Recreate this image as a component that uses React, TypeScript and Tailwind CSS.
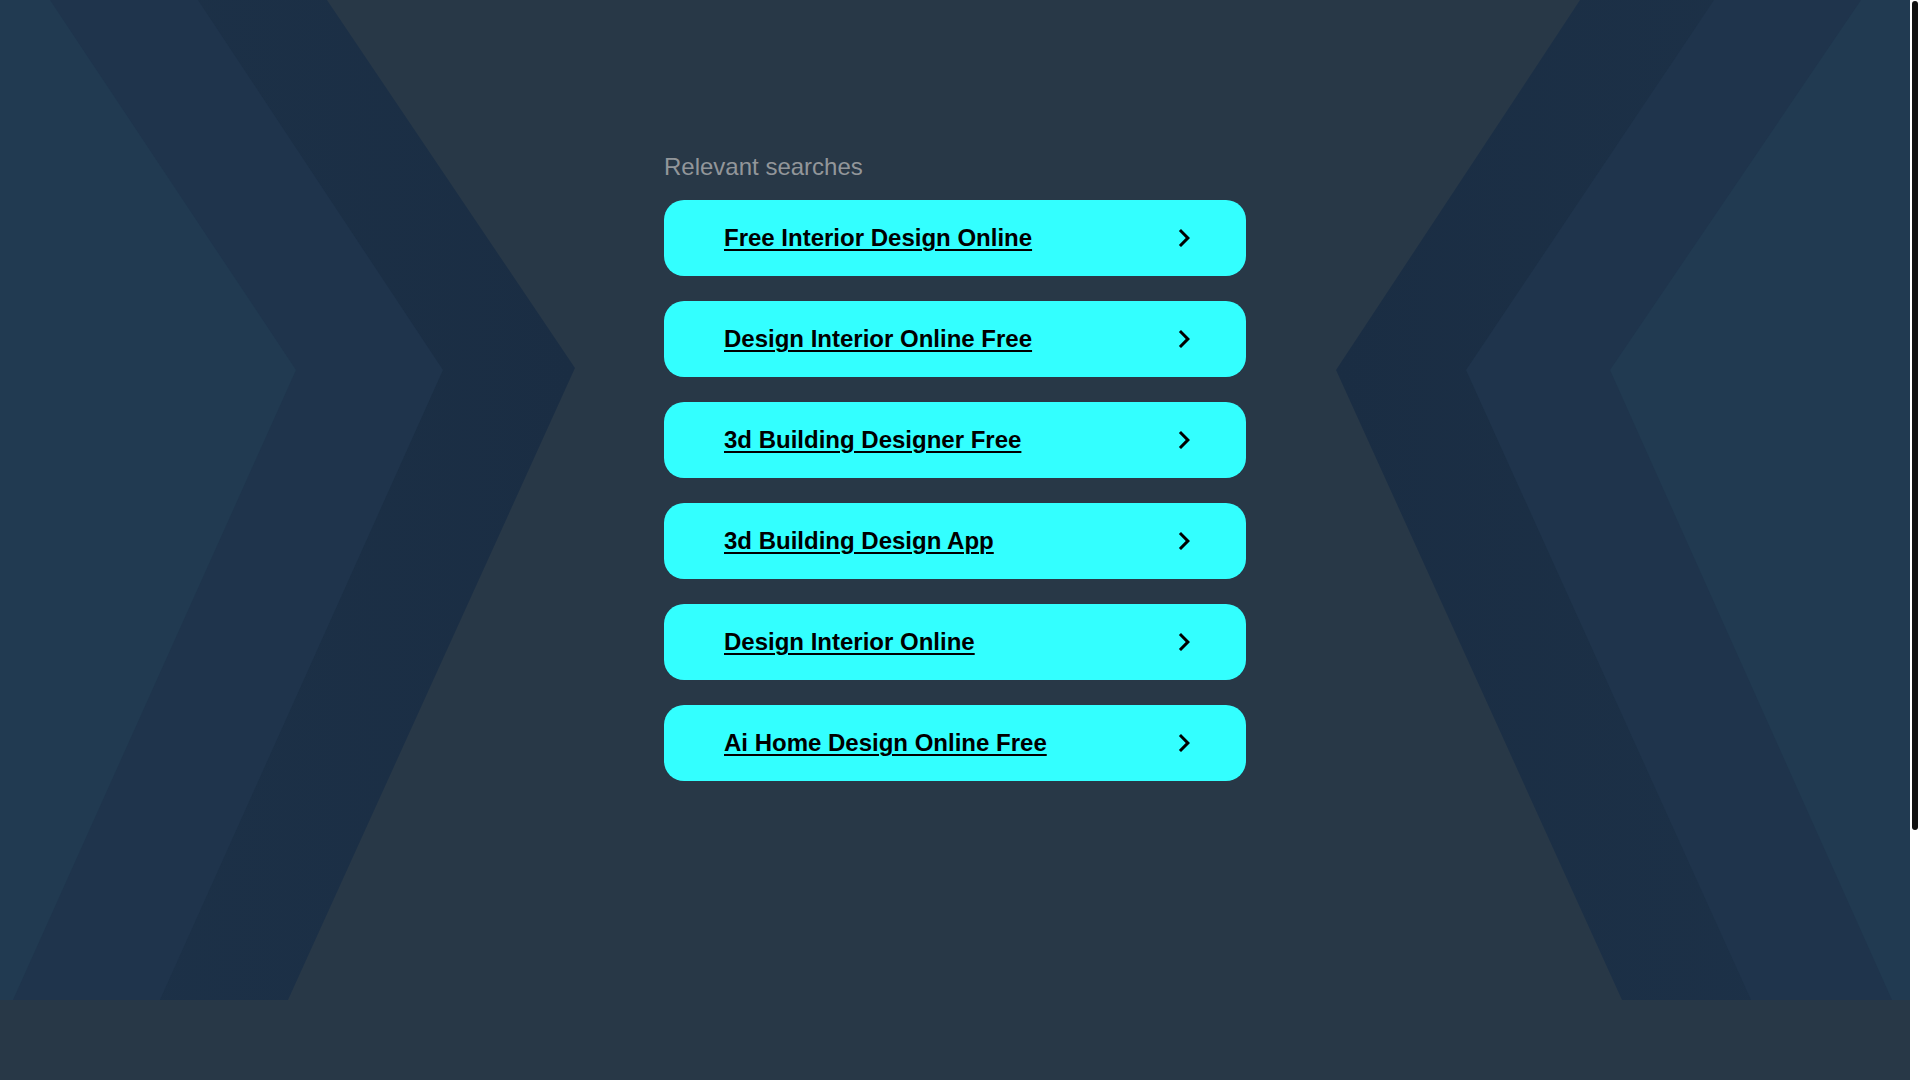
const searches = [
  "Free Interior Design Online",
  "Design Interior Online Free",
  "3d Building Designer Free",
  "3d Building Design App",
  "Design Interior Online",
  "Ai Home Design Online Free",
];

const Backdrop = () => (
  <svg
    className="pointer-events-none absolute left-0 top-0 h-[1000px] w-full"
    viewBox="0 0 1910 1000"
    preserveAspectRatio="none"
  >
    <defs>
      <linearGradient id="bandL" x1="0" x2="1" y1="0" y2="0">
        <stop offset="0" stopColor="#1d3249" />
        <stop offset="1" stopColor="#1a2d43" />
      </linearGradient>
      <linearGradient id="bandR" x1="1" x2="0" y1="0" y2="0">
        <stop offset="0" stopColor="#1d3249" />
        <stop offset="1" stopColor="#1a2d43" />
      </linearGradient>
    </defs>
    {/* left chevrons */}
    <polygon points="0,0 327,0 575,368 288,1000 0,1000" fill="url(#bandL)" />
    <polygon points="0,0 198,0 443,370 160,1000 0,1000" fill="#1f344c" />
    <polygon points="0,0 50,0 296,370 13,1000 0,1000" fill="#213a51" />
    {/* right chevrons */}
    <polygon points="1580,0 1910,0 1910,1000 1622,1000 1336,370" fill="url(#bandR)" />
    <polygon points="1714,0 1910,0 1910,1000 1751,1000 1466,370" fill="#1f344c" />
    <polygon points="1861,0 1910,0 1910,1000 1892,1000 1610,370" fill="#213a51" />
  </svg>
);

const Chevron = () => (
  <svg width="36" height="36" viewBox="0 0 24 24" className="shrink-0">
    <path d="M10 6L8.59 7.41 13.17 12l-4.58 4.59L10 18l6-6z" fill="#000" />
  </svg>
);

export default function App() {
  return (
    <div className="flex h-screen overflow-hidden bg-[#283847] font-['Liberation_Sans',Arial,sans-serif]">
      <div className="relative h-[1400px] w-[1910px] shrink-0 overflow-hidden">
        <Backdrop />
        <main className="relative mx-auto w-[582px] pt-[153px]">
          <h2 className="mb-[20px] text-[24px] leading-[27px] font-normal text-[#92969a]">Relevant searches</h2>
          <ul className="flex flex-col gap-[25px]">
            {searches.map((s) => (
              <li key={s}>
                <a
                  href="#"
                  className="flex h-[76px] items-center justify-between rounded-[20px] bg-[#33ffff] pl-[60px] pr-[44px]"
                >
                  <span className="text-[24px] font-bold text-black underline decoration-2 underline-offset-[3px]">{s}</span>
                  <Chevron />
                </a>
              </li>
            ))}
          </ul>
        </main>
      </div>
      {/* scrollbar */}
      <div className="h-full w-[10px] shrink-0 bg-white pt-[1px]">
        <div className="mx-auto h-[829px] w-[6px] rounded-full bg-[#111]" />
      </div>
    </div>
  );
}
